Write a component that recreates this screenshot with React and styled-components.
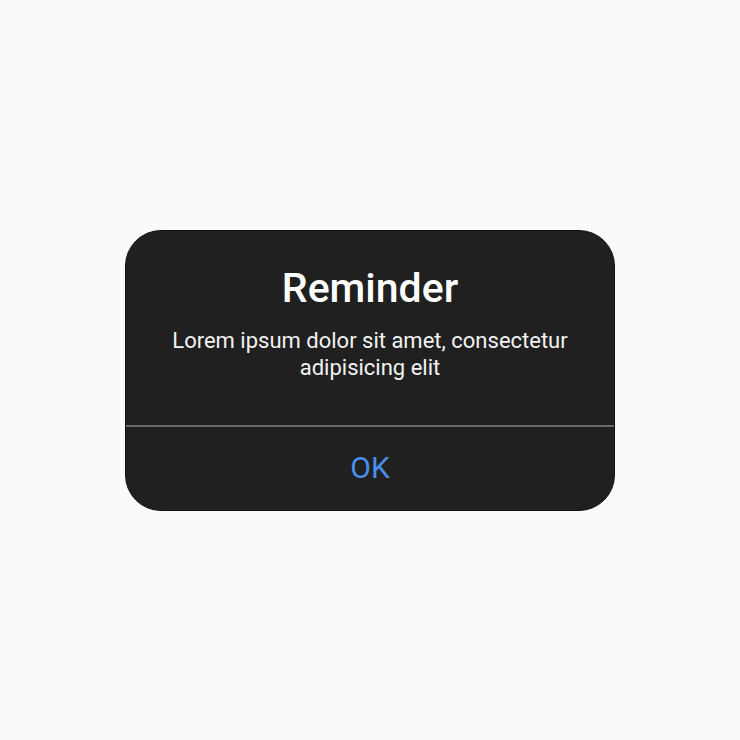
import React from "react";
import styled, { createGlobalStyle } from "styled-components";

const Global = createGlobalStyle`
  html, body { margin: 0; padding: 0; background: #fafafa; }
  body { font-family: Roboto, "Noto Sans", sans-serif; }
`;

const Page = styled.div`
  width: 740px;
  height: 740px;
  display: flex;
  align-items: center;
  justify-content: center;
`;

const Dialog = styled.div`
  width: 490px;
  height: 281px;
  box-sizing: border-box;
  background: #202020;
  border: 1px solid #111;
  border-radius: 36px;
  display: flex;
  flex-direction: column;
  overflow: hidden;
`;

const Content = styled.div`
  height: 194px;
  box-sizing: border-box;
  padding: 33px 30px 0;
  display: flex;
  flex-direction: column;
  align-items: center;
  text-align: center;
`;

const Title = styled.h1`
  margin: 0;
  font-size: 41px;
  line-height: 48px;
  font-weight: 500;
  color: #ffffff;
`;

const Message = styled.p`
  margin: 15px 0 0;
  font-size: 22px;
  line-height: 27px;
  font-weight: 400;
  color: #f2f2f2;
`;

const Divider = styled.div`
  height: 2px;
  background: #6a6a6a;
`;

const Actions = styled.div`
  flex: 1;
  display: flex;
  align-items: center;
  justify-content: center;
`;

const ActionButton = styled.button`
  background: none;
  border: none;
  padding: 0 8px;
  font-family: inherit;
  font-size: 30px;
  line-height: 34px;
  font-weight: 400;
  color: #4a8fec;
  cursor: pointer;
`;

export default function App() {
  return (
    <>
      <Global />
      <Page>
        <Dialog>
          <Content>
            <Title>Reminder</Title>
            <Message>
              Lorem ipsum dolor sit amet, consectetur
              <br />
              adipisicing elit
            </Message>
          </Content>
          <Divider />
          <Actions>
            <ActionButton>OK</ActionButton>
          </Actions>
        </Dialog>
      </Page>
    </>
  );
}
